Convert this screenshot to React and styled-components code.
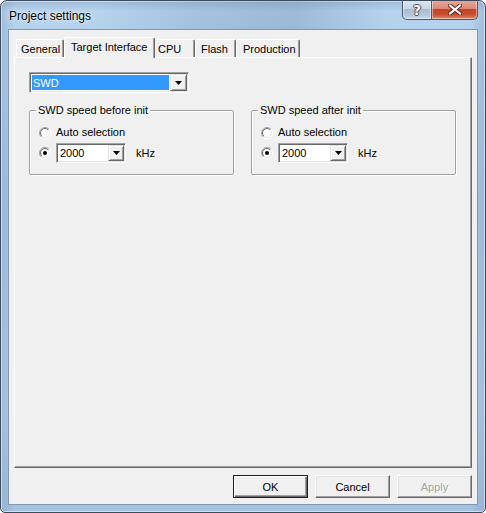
import React from "react";
import styled, { createGlobalStyle, css } from "styled-components";

const GlobalStyle = createGlobalStyle`
  html, body {
    margin: 0;
    padding: 0;
  }
  body {
    background: #ffffff;
    font-family: "Liberation Sans", Arial, sans-serif;
    font-size: 11px;
    color: #000;
  }
`;

// raised / sunken classic 3D edges
const raised = css`
  border: 1px solid;
  border-color: #ffffff #696969 #696969 #ffffff;
  box-shadow: inset -1px -1px 0 #a0a0a0, inset 1px 1px 0 #e3e3e3;
`;

const sunken = css`
  border: 1px solid;
  border-color: #a0a0a0 #ffffff #ffffff #a0a0a0;
  box-shadow: inset 1px 1px 0 #696969, inset -1px -1px 0 #e3e3e3;
`;

const Window = styled.div`
  box-sizing: border-box;
  width: 486px;
  height: 513px;
  border: 1px solid #3b4a5c;
  border-radius: 7px 7px 5px 5px;
  padding: 0 7px 7px 7px;
  display: flex;
  flex-direction: column;
  overflow: hidden;
  background:
    linear-gradient(90deg, rgba(120, 150, 185, 0.35) 0%, rgba(255, 255, 255, 0) 3%, rgba(255, 255, 255, 0) 97%, rgba(120, 150, 185, 0.35) 100%),
    linear-gradient(180deg, #9fbad6 0%, #b7d3ee 2%, #b3d0ec 6%, #a9c7e6 40%, #b3cfea 80%, #a4c1df 100%);
  box-shadow: inset 0 0 0 1px rgba(255, 255, 255, 0.55);
`;

const TitleBar = styled.div`
  height: 28px;
  display: flex;
  align-items: flex-start;
  flex-shrink: 0;
  background: linear-gradient(90deg, rgba(255, 255, 255, 0) 20%, rgba(90, 120, 150, 0.18) 40%, rgba(90, 120, 150, 0.28) 60%, rgba(255, 255, 255, 0) 80%);
  margin: 0 -7px;
  padding: 0 7px;
`;

const Title = styled.div`
  margin: 8px 0 0 1px;
  font-size: 12px;
  line-height: 14px;
  color: #000;
  text-shadow: 0 0 6px rgba(255, 255, 255, 0.9), 0 0 2px rgba(255, 255, 255, 0.9);
`;

const Captions = styled.div`
  margin-left: auto;
  margin-top: -1px;
  display: flex;
`;

const CaptionButton = styled.div`
  box-sizing: border-box;
  width: ${(p) => p.w}px;
  height: 20px;
  display: flex;
  align-items: center;
  justify-content: center;
  border: 1px solid #4a5a6e;
  border-top: none;
  box-shadow: inset 0 0 0 1px rgba(255, 255, 255, 0.45);
  ${(p) =>
    p.close
      ? css`
          border-left: none;
          border-radius: 0 0 5px 0;
          background: linear-gradient(180deg, #e9a99b 0%, #dc8a77 45%, #c2442b 50%, #c74d2f 75%, #de8a66 100%);
        `
      : css`
          border-radius: 0 0 0 5px;
          background: linear-gradient(180deg, #dde7f1 0%, #c7d6e5 45%, #a9bdd2 50%, #b4c7db 80%, #c9dbec 100%);
        `}
`;

const HelpGlyph = styled.span`
  font-family: "DejaVu Sans", sans-serif;
  font-weight: bold;
  font-size: 14px;
  line-height: 14px;
  color: #fff;
  text-shadow: 1px 0 0 #3f4c5c, -1px 0 0 #3f4c5c, 0 1px 0 #3f4c5c, 0 -1px 0 #3f4c5c;
`;

const Client = styled.div`
  flex: 1;
  display: flex;
  flex-direction: column;
  background: #f0f0f0;
  border: 1px solid #8197b0;
  padding: 7px 5px 6px 5px;
  min-height: 0;
`;

const TabRow = styled.div`
  display: flex;
  align-items: flex-end;
  height: 20px;
  padding-left: 2px;
  position: relative;
  z-index: 1;
`;

const Tab = styled.div`
  box-sizing: border-box;
  width: ${(p) => p.w}px;
  height: ${(p) => (p.active ? 21 : 18)}px;
  margin-bottom: ${(p) => (p.active ? -1 : 0)}px;
  padding-left: ${(p) => p.pl}px;
  padding-top: 3px;
  line-height: 13px;
  white-space: nowrap;
  background: #f0f0f0;
  border-top: 1px solid #ffffff;
  border-left: 1px solid #ffffff;
  border-right: 1px solid #696969;
  border-radius: 2px 2px 0 0;
  box-shadow: inset -1px 0 0 #a0a0a0;
  ${(p) =>
    p.hideLeft &&
    css`
      border-left-color: transparent;
    `}
`;

const Panel = styled.div`
  flex: 1;
  box-sizing: border-box;
  border: 1px solid;
  border-color: #ffffff #696969 #696969 #ffffff;
  box-shadow: inset -1px -1px 0 #a0a0a0;
  padding: 14px 14px;
  background: #f0f0f0;
`;

const Combo = styled.div`
  box-sizing: border-box;
  width: ${(p) => p.w}px;
  height: ${(p) => p.h}px;
  display: flex;
  align-items: stretch;
  background: #ffffff;
  padding: 1px;
  ${sunken}
`;

const ComboText = styled.div`
  flex: 1;
  display: flex;
  align-items: center;
  padding-left: ${(p) => (p.selected ? 1 : 2)}px;
  margin: ${(p) => (p.selected ? "1px" : "0")};
  background: ${(p) => (p.selected ? "#3399ff" : "transparent")};
  color: ${(p) => (p.selected ? "#ffffff" : "#000000")};
  font-size: 11px;
`;

const DropButton = styled.div`
  box-sizing: border-box;
  width: ${(p) => p.w}px;
  display: flex;
  align-items: center;
  justify-content: center;
  background: #f0f0f0;
  border: 1px solid;
  border-color: #e3e3e3 #696969 #696969 #e3e3e3;
  box-shadow: inset 1px 1px 0 #ffffff, inset -1px -1px 0 #a0a0a0;
`;

const GroupRow = styled.div`
  display: flex;
  gap: 17px;
  margin-top: 11px;
`;

const Group = styled.fieldset`
  box-sizing: border-box;
  width: 205px;
  height: 71px;
  margin: 0;
  padding: 7px 8px 0 9px;
  border: 1px solid #a0a0a0;
  border-radius: 2px;
  box-shadow: 1px 1px 0 #ffffff, inset 1px 1px 0 #ffffff;
  min-inline-size: 0;
`;

const Legend = styled.legend`
  padding: 0 2px;
  margin-left: -3px;
  font-size: 11px;
  line-height: 13px;
`;

const RadioRow = styled.div`
  display: flex;
  align-items: center;
  height: ${(p) => p.h}px;
  gap: 5px;
`;

const RadioText = styled.span`
  line-height: 13px;
`;

const Unit = styled.span`
  margin-left: 5px;
`;

const ButtonRow = styled.div`
  display: flex;
  justify-content: flex-end;
  gap: 7px;
  margin-top: 7px;
`;

const Button = styled.div`
  box-sizing: border-box;
  width: 75px;
  height: 23px;
  display: flex;
  align-items: center;
  justify-content: center;
  background: #f0f0f0;
  ${raised}
  ${(p) =>
    p.primary &&
    css`
      border: 1px solid #202020;
      box-shadow: inset 1px 1px 0 #ffffff, inset -1px -1px 0 #696969, inset -2px -2px 0 #a0a0a0;
    `}
  color: ${(p) => (p.disabled ? "#a0a0a0" : "#000")};
  text-shadow: ${(p) => (p.disabled ? "1px 1px 0 #ffffff" : "none")};
`;

const Arrow = () => (
  <svg width="7" height="4" viewBox="0 0 7 4">
    <path d="M0 0h7L3.5 4z" fill="#000" />
  </svg>
);

const CloseIcon = () => (
  <svg width="14" height="11" viewBox="0 0 14 11">
    <path d="M2 1.5L12 9.5M12 1.5L2 9.5" stroke="#5b1d12" strokeWidth="4" strokeLinecap="square" />
    <path d="M2 1.5L12 9.5M12 1.5L2 9.5" stroke="#ffffff" strokeWidth="2.2" strokeLinecap="square" />
  </svg>
);

const Radio = ({ checked }) => (
  <svg width="12" height="12" viewBox="0 0 12 12">
    <defs>
      <linearGradient id="rOuter" x1="0" y1="0" x2="1" y2="1">
        <stop offset="0.45" stopColor="#a0a0a0" />
        <stop offset="0.55" stopColor="#ffffff" />
      </linearGradient>
      <linearGradient id="rInner" x1="0" y1="0" x2="1" y2="1">
        <stop offset="0.45" stopColor="#696969" />
        <stop offset="0.55" stopColor="#e3e3e3" />
      </linearGradient>
    </defs>
    <circle cx="6" cy="6" r="5.5" fill="none" stroke="url(#rOuter)" strokeWidth="1" />
    <circle cx="6" cy="6" r="4.5" fill="#ffffff" stroke="url(#rInner)" strokeWidth="1" />
    {checked && <circle cx="6" cy="6" r="2" fill="#000" />}
  </svg>
);

const SpeedGroup = ({ title }) => (
  <Group>
    <Legend>{title}</Legend>
    <RadioRow h={17}>
      <Radio />
      <RadioText>Auto selection</RadioText>
    </RadioRow>
    <RadioRow h={24}>
      <Radio checked />
      <Combo w={70} h={20}>
        <ComboText>2000</ComboText>
        <DropButton w={16}>
          <Arrow />
        </DropButton>
      </Combo>
      <Unit>kHz</Unit>
    </RadioRow>
  </Group>
);

const tabs = [
  { label: "General", w: 48, pl: 4 },
  { label: "Target Interface", w: 91, pl: 6, active: true },
  { label: "CPU", w: 40, pl: 2 },
  { label: "Flash", w: 41, pl: 5 },
  { label: "Production", w: 64, pl: 6 },
];

const App = () => {
  return (
    <>
      <GlobalStyle />
      <Window>
        <TitleBar>
          <Title>Project settings</Title>
          <Captions>
            <CaptionButton w={30}>
              <HelpGlyph>?</HelpGlyph>
            </CaptionButton>
            <CaptionButton w={46} close>
              <CloseIcon />
            </CaptionButton>
          </Captions>
        </TitleBar>
        <Client>
          <TabRow>
            {tabs.map((t, i) => (
              <Tab
                key={t.label}
                w={t.w}
                pl={t.pl}
                active={t.active}
                hideLeft={i > 0 && tabs[i - 1].active}
              >
                {t.label}
              </Tab>
            ))}
          </TabRow>
          <Panel>
            <Combo w={160} h={21}>
              <ComboText selected>SWD</ComboText>
              <DropButton w={17}>
                <Arrow />
              </DropButton>
            </Combo>
            <GroupRow>
              <SpeedGroup title="SWD speed before init" />
              <SpeedGroup title="SWD speed after init" />
            </GroupRow>
          </Panel>
          <ButtonRow>
            <Button primary>OK</Button>
            <Button>Cancel</Button>
            <Button disabled>Apply</Button>
          </ButtonRow>
        </Client>
      </Window>
    </>
  );
};

export default App;
